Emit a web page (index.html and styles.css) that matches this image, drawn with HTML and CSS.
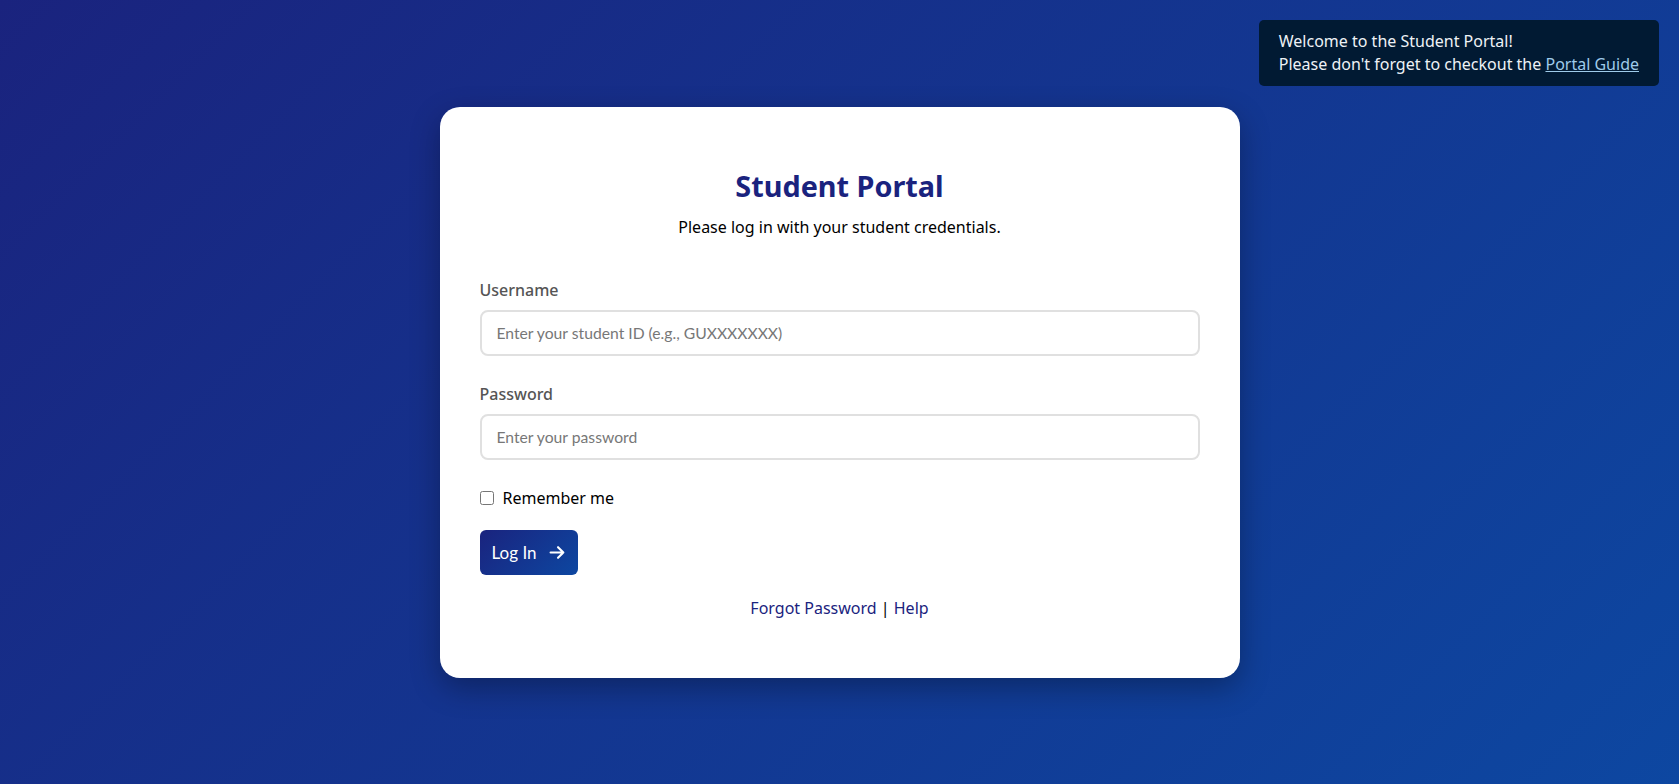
FILE: index.html
```html
<!DOCTYPE html>
<html lang="en">
  <head>
    <meta charset="UTF-8" />
    <meta name="viewport" content="width=device-width, initial-scale=1.0" />
    <title>Student Portal - Login</title>
    <link rel="stylesheet" href="styles.css">
  </head>
  <body>
    <!-- aviso de bienvenida arriba a la derecha -->
    <div class="aviso">
      Welcome to the Student Portal!<br>
      Please don't forget to checkout the <a href="#">Portal Guide</a>
    </div>

    <main class="login">
      <h1>Student Portal</h1>
      <p class="subtitulo">Please log in with your student credentials.</p>

      <form>
        <div class="campo">
          <label for="usuario">Username</label>
          <input type="text" id="usuario" placeholder="Enter your student ID (e.g., GUXXXXXXX)">
        </div>
        <div class="campo">
          <label for="clave">Password</label>
          <input type="password" id="clave" placeholder="Enter your password">
        </div>
        <div class="recordar">
          <input type="checkbox" id="recordar">
          <label for="recordar">Remember me</label>
        </div>
        <button type="submit">
          Log In
          <svg width="17" height="17" viewBox="0 0 16 16" aria-hidden="true">
            <path d="M1.5 8h12M8.5 3 13.5 8l-5 5" fill="none" stroke="white" stroke-width="2" stroke-linecap="round" stroke-linejoin="round"/>
          </svg>
        </button>
      </form>

      <p class="enlaces"><a href="#">Forgot Password</a> | <a href="#">Help</a></p>
    </main>
  </body>
</html>
```

FILE: styles.css
```css
/* Fondo con degradado y la tarjeta centrada con flex */
body {
  margin: 0;
  min-height: 100vh;
  display: flex;
  justify-content: center;
  align-items: center;
  font-family: "Noto Sans", "Open Sans", sans-serif;
  font-size: 16px;
  background: linear-gradient(135deg, #1a237e, #0d47a1);
}

.aviso {
  position: fixed; /* flota encima de todo */
  top: 20px;
  right: 20px;
  padding: 10px 20px;
  background-color: #011a33;
  color: #eef2f6;
  line-height: 23px;
  white-space: nowrap;
  border-radius: 5px;
}
.aviso a {
  color: #9fcbea;
}

.login {
  width: 800px;
  box-sizing: border-box;
  padding: 40px;
  background-color: white;
  border-radius: 20px;
  box-shadow: 0 10px 30px rgba(0, 0, 0, 0.3);
}

.login h1 {
  margin: 19px 0 11px;
  text-align: center;
  color: #1a237e;
  font-size: 1.8em;
  line-height: 39px;
}
.subtitulo {
  margin: 0 0 41px;
  text-align: center;
  line-height: 22px;
}

.campo {
  margin-bottom: 27px;
}
.campo label {
  display: block;
  margin-bottom: 9px;
  color: #555;
  font-weight: 500;
  line-height: 22px;
}
.campo input {
  width: 100%;
  height: 46px;
  box-sizing: border-box;
  padding: 0 15px;
  border: 2px solid #e0e0e0;
  border-radius: 8px;
  font-family: Lato, sans-serif;
  font-size: 15.7px;
}
.campo input::placeholder {
  color: #777;
}

.recordar {
  display: flex;
  align-items: center;
  gap: 9px;
  margin: 1px 0 21px;
  line-height: 22px;
}
.recordar input {
  width: 14px;
  height: 14px;
  margin: 0;
}

button {
  display: flex;
  align-items: center;
  gap: 12px;
  height: 45px;
  padding: 0 12px;
  border: none;
  border-radius: 6px;
  background: linear-gradient(135deg, #1a237e, #0d47a1);
  color: white;
  font-family: Lato, sans-serif;
  font-size: 17px;
}

.enlaces {
  margin: 22px 0 19px;
  text-align: center;
  line-height: 22px;
}
.enlaces a {
  color: #1a237e;
  text-decoration: none;
}
```
